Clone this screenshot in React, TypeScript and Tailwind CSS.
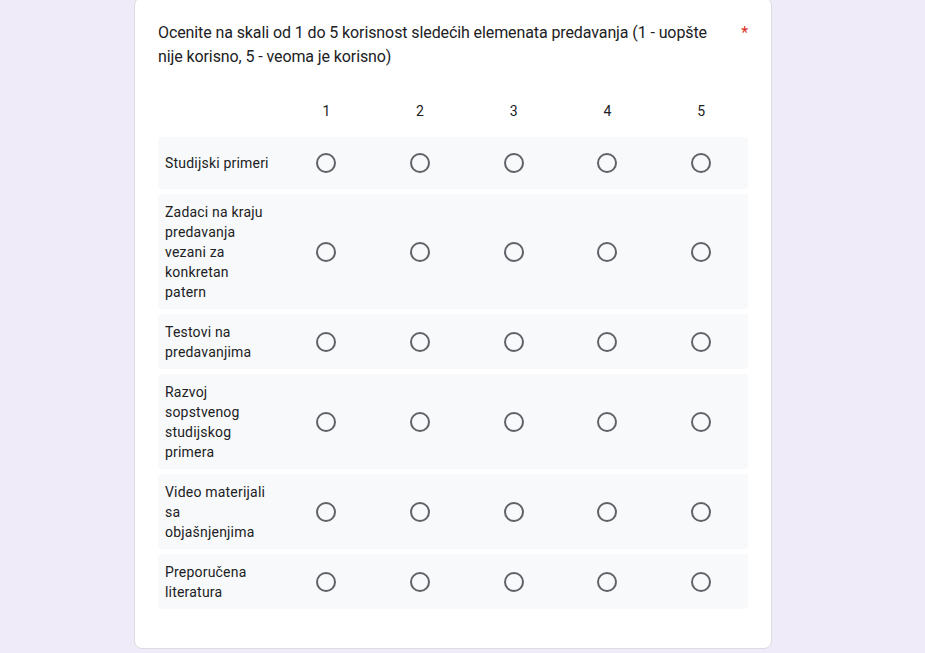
import React from 'react';

const rows = [
  'Studijski primeri',
  'Zadaci na kraju predavanja vezani za konkretan patern',
  'Testovi na predavanjima',
  'Razvoj sopstvenog studijskog primera',
  'Video materijali sa objašnjenjima',
  'Preporučena literatura',
];

const cols = [1, 2, 3, 4, 5];

const Radio = () => (
  <div className="w-5 h-5 rounded-full border-2 border-[#5f6368]" />
);

const App = () => {
  return (
    <div className="min-h-[653px] bg-[#f0ebf8] overflow-hidden" style={{ fontFamily: 'Roboto, "Liberation Sans", sans-serif' }}>
      <div className="ml-[134px] mt-[-3px] w-[638px] rounded-lg border border-[#dadce0] bg-white px-[23px] pt-[23px] pb-[39px]">
        {/* Question title */}
        <div className="flex text-[16px] leading-6 text-[#202124] tracking-[-0.1px]">
          <div className="flex-1">
            Ocenite na skali od 1 do 5 korisnost sledećih elemenata predavanja (1 - uopšte nije korisno, 5 - veoma je korisno)
          </div>
          <span className="pl-6 text-[#d93025]">*</span>
        </div>

        {/* Grid */}
        <div className="mt-8">
          <div className="grid grid-cols-[121.5px_repeat(5,1fr)] pb-4 text-[14px] leading-5 text-[#202124]">
            <div />
            {cols.map((c) => (
              <div key={c} className="text-center">{c}</div>
            ))}
          </div>
          <div className="flex flex-col gap-[5px]">
            {rows.map((label) => (
              <div
                key={label}
                className="grid grid-cols-[121.5px_repeat(5,1fr)] items-center min-h-[52px] py-[7.5px] rounded bg-[#f8f9fa]"
              >
                <div className="pl-[7px] pr-2 text-[14px] leading-5 tracking-[0.2px] text-[#202124]">{label}</div>
                {cols.map((c) => (
                  <div key={c} className="flex justify-center">
                    <Radio />
                  </div>
                ))}
              </div>
            ))}
          </div>
        </div>
      </div>
    </div>
  );
};

export default App;
